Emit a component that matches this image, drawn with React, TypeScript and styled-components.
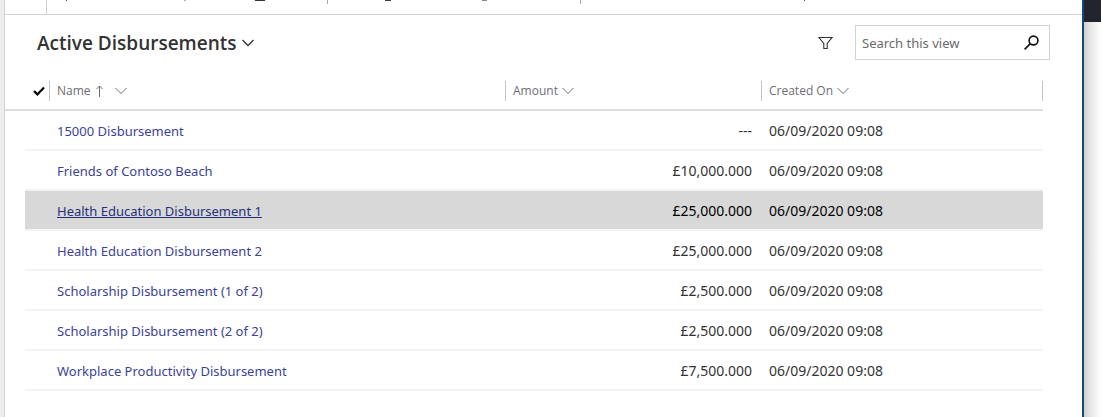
import React from "react";
import styled, { createGlobalStyle } from "styled-components";

const GlobalStyle = createGlobalStyle`
  *, *::before, *::after { box-sizing: border-box; }
  body {
    margin: 0;
    background: #fff;
    color: #333;
    font-family: "Noto Sans", "Open Sans", sans-serif;
    font-size: 14px;
  }
`;

const Page = styled.div`
  display: flex;
  min-height: 100vh;
`;

const LeftEdge = styled.div`
  flex: none;
  width: 5px;
  background: #ededed;
  border-right: 1px solid #d2d2d2;
`;

const Main = styled.main`
  flex: 1;
  min-width: 0;
`;

const RightEdge = styled.div`
  flex: none;
  width: 19px;
  border-left: 2px solid #174a73;
  background: linear-gradient(to right, #cfcfcf, #e6e6e6 35%, #fbfbfb 90%);
`;

const DarkBar = styled.div`
  height: 22px;
  background: #22252e;
`;

const CommandBar = styled.div`
  display: flex;
  align-items: flex-start;
  height: 15px;
  overflow: hidden;
  border-bottom: 1px solid #d2d2d2;
`;

const Group = styled.div<{ $width?: number; $line?: "full" | "short" | "none" }>`
  display: flex;
  flex: ${(p) => (p.$width ? "none" : "1")};
  width: ${(p) => (p.$width ? `${p.$width}px` : "auto")};
  height: ${(p) => (p.$line === "full" ? "14px" : "4px")};
  border-right: ${(p) => (p.$line === "none" ? "0" : p.$line === "full" ? "1px solid #d0d0d0" : "1px solid #a8a8a8")};
`;

const Tip = styled.span<{ $gap: number; $width: number; $color: string }>`
  flex: none;
  width: ${(p) => p.$width}px;
  height: 1px;
  margin-left: ${(p) => p.$gap}px;
  background: ${(p) => p.$color};
`;

const ViewHeader = styled.header`
  display: flex;
  align-items: center;
  padding: 10px 32px 0;
`;

const ViewTitle = styled.h1`
  flex: 1;
  margin: 0;
  font-family: "Open Sans", sans-serif;
  font-size: 19px;
  line-height: 28px;
  font-weight: 600;
`;

const PlainButton = styled.button`
  display: inline-flex;
  align-items: center;
  gap: 5px;
  padding: 0;
  border: 0;
  background: none;
  color: inherit;
  font: inherit;
`;

const FilterButton = styled(PlainButton)`
  margin-right: 22px;
  color: #333;
`;

const SearchBox = styled.form`
  display: flex;
  align-items: center;
  width: 195px;
  height: 35px;
  padding: 0 10px 0 6px;
  border: 1px solid #d2d2d2;
`;

const SearchInput = styled.input`
  flex: 1;
  min-width: 0;
  padding: 0;
  border: 0;
  outline: 0;
  background: none;
  color: #333;
  font: inherit;
  font-size: 13px;

  &::placeholder {
    color: #6b6b6b;
    opacity: 1;
  }
`;

const GridArea = styled.section`
  padding-right: 39px;
`;

const Grid = styled.table`
  width: 100%;
  table-layout: fixed;
  border-collapse: separate;
  border-spacing: 0;
`;

const Col = styled.col<{ $width?: number }>`
  width: ${(p) => (p.$width ? `${p.$width}px` : "auto")};
`;

const HeadCell = styled.th`
  height: 51px;
  padding: 12px 0 0;
  border-bottom: 2px solid #dedede;
  color: #6e6e78;
  font-family: "Open Sans", sans-serif;
  font-size: 12px;
  font-weight: 400;
  text-align: left;
`;

const HeadLabel = styled.div<{ $last?: boolean }>`
  display: flex;
  align-items: center;
  height: 20px;
  padding-left: 7px;
  border-left: 1px solid #c2c2c2;
  border-right: ${(p) => (p.$last ? "1px solid #c2c2c2" : "0")};
`;

const HeadButton = styled(PlainButton)`
  gap: 4px;
`;

const SortMark = styled.span`
  display: flex;
  padding: 0 8px 0 0;
`;

const CheckMark = styled(PlainButton)`
  display: flex;
  height: 20px;
  padding-left: 28px;
  color: #000;
`;

const Gutter = styled.td`
  padding: 0;
`;

const Row = styled.tr<{ $active?: boolean }>`
  color: ${(p) => (p.$active ? "#000" : "#333")};

  td:not(:first-child) {
    background: ${(p) => (p.$active ? "#d8d8d8" : "transparent")};
    background-clip: padding-box;
  }
`;

const Cell = styled.td<{ $end?: boolean }>`
  height: 40px;
  padding: 2px 9px 0 8px;
  border-bottom: 2px solid #f3f3f3;
  line-height: 20px;
  text-align: ${(p) => (p.$end ? "right" : "left")};
  white-space: nowrap;
`;

const RecordLink = styled.a<{ $active?: boolean }>`
  color: ${(p) => (p.$active ? "#28307c" : "#3b4397")};
  font-size: 13px;
  text-decoration: ${(p) => (p.$active ? "underline" : "none")};
`;

const Chevron = ({ weight = 1 }: { weight?: number }) => (
  <svg width="12" height="8" viewBox="0 0 12 8" fill="none" stroke="currentColor" strokeWidth={weight} aria-hidden="true">
    <path d="M.5 1 6 6.5 11.5 1" />
  </svg>
);

const ArrowUp = () => (
  <svg width="8" height="12" viewBox="0 0 8 12" fill="none" stroke="currentColor" aria-hidden="true">
    <path d="M4.5 12V1M1.500 4l3-3 3 3" />
  </svg>
);

const Check = () => (
  <svg width="12" height="10" viewBox="0 0 12 10" fill="none" stroke="currentColor" strokeWidth="2.2" aria-hidden="true">
    <path d="M1 5l3.400 3.400L11 1.400" />
  </svg>
);

const Funnel = () => (
  <svg width="15" height="14" viewBox="0 0 15 14" fill="none" stroke="currentColor" strokeWidth="1.1" aria-hidden="true">
    <path d="M1 1.500h13L9.200 7.500v5H5.800v-5z" />
  </svg>
);

const Magnifier = () => (
  <svg width="15" height="15" viewBox="0 0 15 15" fill="none" stroke="#111" strokeWidth="1.6" aria-hidden="true">
    <circle cx="9.500" cy="5.500" r="4.400" />
    <path d="M6.400 8.600.6 14.400" />
  </svg>
);

const records = [
  { name: "15000 Disbursement", amount: "---", created: "06/09/2020 09:08" },
  { name: "Friends of Contoso Beach", amount: "£10,000.000", created: "06/09/2020 09:08" },
  { name: "Health Education Disbursement 1", amount: "£25,000.000", created: "06/09/2020 09:08", active: true },
  { name: "Health Education Disbursement 2", amount: "£25,000.000", created: "06/09/2020 09:08" },
  { name: "Scholarship Disbursement (1 of 2)", amount: "£2,500.000", created: "06/09/2020 09:08" },
  { name: "Scholarship Disbursement (2 of 2)", amount: "£2,500.000", created: "06/09/2020 09:08" },
  { name: "Workplace Productivity Disbursement", amount: "£7,500.000", created: "06/09/2020 09:08" },
];

export default function App() {
  return (
    <Page>
      <GlobalStyle />
      <LeftEdge />
      <Main>
        <CommandBar>
          <Group $width={42} $line="full" />
          <Group $width={281} $line="short">
            <Tip $gap={19} $width={1} $color="#3a45b0" />
            <Tip $gap={117} $width={2} $color="#8fc98f" />
            <Tip $gap={69} $width={10} $color="#333" />
          </Group>
          <Group $width={253} $line="short">
            <Tip $gap={57} $width={6} $color="#444" />
            <Tip $gap={91} $width={5} $color="#888" />
          </Group>
          <Group $line="none">
            <Tip $gap={223} $width={1} $color="#7a2040" />
          </Group>
        </CommandBar>
        <ViewHeader>
          <ViewTitle>
            <PlainButton type="button">
              Active Disbursements
              <Chevron weight={1.3} />
            </PlainButton>
          </ViewTitle>
          <FilterButton type="button" aria-label="Filter">
            <Funnel />
          </FilterButton>
          <SearchBox role="search" onSubmit={(e) => e.preventDefault()}>
            <SearchInput type="text" placeholder="Search this view" aria-label="Search this view" />
            <PlainButton type="submit" aria-label="Search">
              <Magnifier />
            </PlainButton>
          </SearchBox>
        </ViewHeader>
        <GridArea>
          <Grid>
            <colgroup>
              <Col $width={20} />
              <Col $width={24} />
              <Col />
              <Col $width={256} />
              <Col $width={282} />
            </colgroup>
            <thead>
              <tr>
                <HeadCell colSpan={2}>
                  <CheckMark type="button" aria-label="Select all">
                    <Check />
                  </CheckMark>
                </HeadCell>
                <HeadCell>
                  <HeadLabel>
                    <HeadButton type="button">
                      Name
                      <SortMark>
                        <ArrowUp />
                      </SortMark>
                      <Chevron />
                    </HeadButton>
                  </HeadLabel>
                </HeadCell>
                <HeadCell>
                  <HeadLabel>
                    <HeadButton type="button">
                      Amount
                      <Chevron />
                    </HeadButton>
                  </HeadLabel>
                </HeadCell>
                <HeadCell>
                  <HeadLabel $last>
                    <HeadButton type="button">
                      Created On
                      <Chevron />
                    </HeadButton>
                  </HeadLabel>
                </HeadCell>
              </tr>
            </thead>
            <tbody>
              {records.map((r) => (
                <Row key={r.name} $active={r.active}>
                  <Gutter />
                  <Cell />
                  <Cell>
                    <RecordLink href="#" $active={r.active}>
                      {r.name}
                    </RecordLink>
                  </Cell>
                  <Cell $end>{r.amount}</Cell>
                  <Cell>{r.created}</Cell>
                </Row>
              ))}
            </tbody>
          </Grid>
        </GridArea>
      </Main>
      <RightEdge>
        <DarkBar />
      </RightEdge>
    </Page>
  );
}
